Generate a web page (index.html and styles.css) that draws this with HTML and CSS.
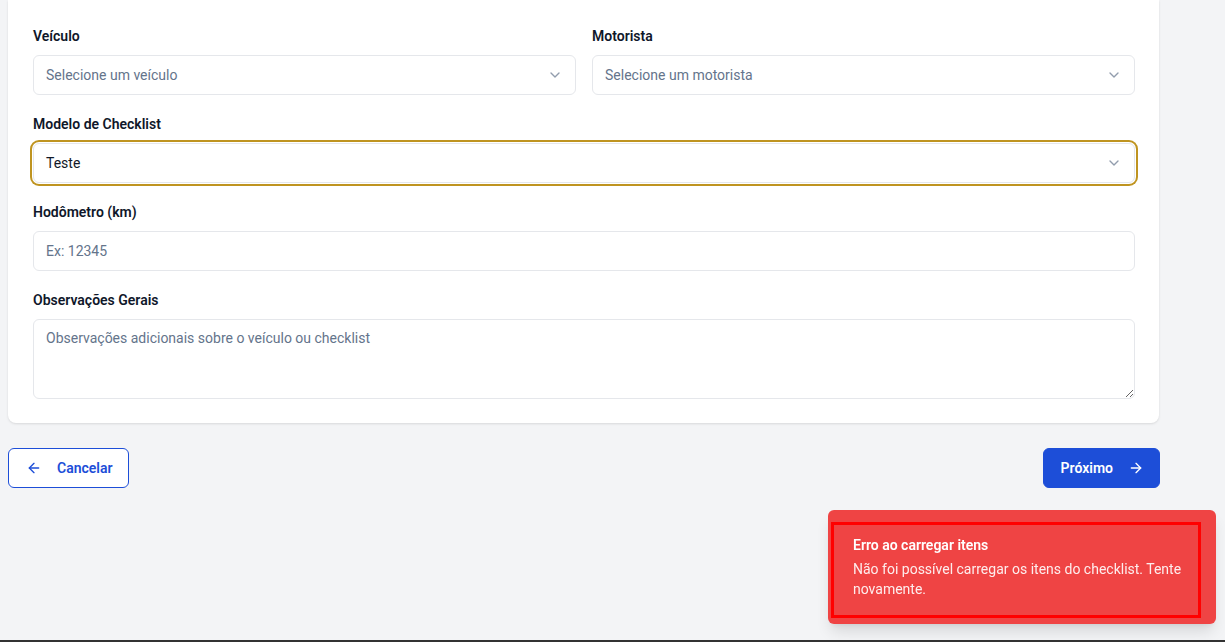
FILE: index.html
```html
<!DOCTYPE html>
<html lang="pt-BR">
<head>
<meta charset="utf-8">
<title>Checklist</title>
<link rel="stylesheet" href="styles.css">
</head>
<body>
<main class="page">
  <section class="card">
    <div class="row">
      <div class="field">
        <label class="label">Veículo</label>
        <button class="select" type="button">
          <span class="placeholder">Selecione um veículo</span>
          <svg class="chev" viewBox="0 0 24 24" width="16" height="16" fill="none" stroke="currentColor" stroke-width="2" stroke-linecap="round" stroke-linejoin="round"><path d="m6 9 6 6 6-6"/></svg>
        </button>
      </div>
      <div class="field">
        <label class="label">Motorista</label>
        <button class="select" type="button">
          <span class="placeholder">Selecione um motorista</span>
          <svg class="chev" viewBox="0 0 24 24" width="16" height="16" fill="none" stroke="currentColor" stroke-width="2" stroke-linecap="round" stroke-linejoin="round"><path d="m6 9 6 6 6-6"/></svg>
        </button>
      </div>
    </div>
    <div class="field">
      <label class="label">Modelo de Checklist</label>
      <button class="select focused" type="button">
        <span class="value">Teste</span>
        <svg class="chev" viewBox="0 0 24 24" width="16" height="16" fill="none" stroke="currentColor" stroke-width="2" stroke-linecap="round" stroke-linejoin="round"><path d="m6 9 6 6 6-6"/></svg>
      </button>
    </div>
    <div class="field">
      <label class="label">Hodômetro (km)</label>
      <input class="input" type="text" placeholder="Ex: 12345">
    </div>
    <div class="field">
      <label class="label">Observações Gerais</label>
      <textarea class="textarea" placeholder="Observações adicionais sobre o veículo ou checklist"></textarea>
    </div>
  </section>
  <div class="actions">
    <button class="btn btn-outline" type="button">
      <svg viewBox="0 0 24 24" width="16" height="16" fill="none" stroke="currentColor" stroke-width="2" stroke-linecap="round" stroke-linejoin="round"><path d="m12 19-7-7 7-7"/><path d="M19 12H5"/></svg>
      <span>Cancelar</span>
    </button>
    <button class="btn btn-primary" type="button">
      <span>Próximo</span>
      <svg viewBox="0 0 24 24" width="16" height="16" fill="none" stroke="currentColor" stroke-width="2" stroke-linecap="round" stroke-linejoin="round"><path d="M5 12h14"/><path d="m12 5 7 7-7 7"/></svg>
    </button>
  </div>
</main>
<div class="toast">
  <div class="toast-inner">
    <div class="toast-title">Erro ao carregar itens</div>
    <div class="toast-desc">Não foi possível carregar os itens do checklist. Tente novamente.</div>
  </div>
</div>
<div class="bottom-bar"></div>
</body>
</html>
```

FILE: styles.css
```css
* { box-sizing: border-box; }
html, body { height: 100%; }
body {
  margin: 0;
  background: #f3f4f6;
  font-family: Roboto, "Noto Sans", sans-serif;
  color: #111827;
  overflow: hidden;
}
.page {
  width: 1167px;
  padding: 0 8px;
}
.card {
  background: #fff;
  border-radius: 0 0 8px 8px;
  box-shadow: 0 1px 3px rgba(0,0,0,0.08), 0 1px 2px rgba(0,0,0,0.04);
  padding: 27px 24px 24px 25px;
  display: flex;
  flex-direction: column;
  gap: 20px;
}
.row {
  display: grid;
  grid-template-columns: 1fr 1fr;
  gap: 16px;
}
.field {
  display: flex;
  flex-direction: column;
}
.label {
  font-size: 14px;
  line-height: 20px;
  font-weight: 600;
  color: #0f172a;
  margin-bottom: 8px;
  position: relative;
  top: -1px;
}
.select, .input, .textarea {
  font-family: inherit;
  font-size: 14px;
  border: 1px solid #e5e7eb;
  border-radius: 6px;
  background: #fff;
  color: #111827;
}
.select {
  height: 40px;
  display: flex;
  align-items: center;
  justify-content: space-between;
  padding: 0 12px;
  text-align: left;
}
.select.focused {
  box-shadow: 0 0 0 1px #fff, 0 0 0 3px #bf9420;
}
.placeholder { color: #64748b; }
.value { color: #111827; }
.chev { color: #64748b; opacity: 0.7; flex: none; }
.input {
  height: 40px;
  padding: 0 12px;
  outline: none;
}
.textarea {
  height: 80px;
  padding: 8px 12px;
  line-height: 20px;
  outline: none;
  resize: vertical;
}
.input::placeholder, .textarea::placeholder { color: #64748b; }
.actions {
  margin-top: 25px;
  margin-right: -1px;
  display: flex;
  justify-content: space-between;
}
.btn {
  height: 40px;
  border-radius: 6px;
  font-family: inherit;
  font-size: 14px;
  font-weight: 600;
  display: flex;
  align-items: center;
  gap: 15px;
  padding: 0 15px 0 17px;
}
.btn-outline {
  background: #fff;
  border: 1px solid #1d4ed8;
  color: #1d4ed8;
}
.btn-primary {
  background: #1d4ed8;
  border: 1px solid #1d4ed8;
  color: #fff;
}
.toast {
  position: fixed;
  right: 9px;
  bottom: 18px;
  width: 388px;
  background: #ef4444;
  border-radius: 6px;
  box-shadow: 0 10px 15px -3px rgba(0,0,0,0.12), 0 4px 6px -4px rgba(0,0,0,0.1);
  padding: 12px 15px 6px 3px;
}
.toast-inner {
  border: 3px solid #ff0000;
  padding: 10px 16px 16px 19px;
  color: #fff;
}
.toast-title {
  font-size: 14px;
  line-height: 20px;
  font-weight: 600;
}
.toast-desc {
  font-size: 14px;
  line-height: 20px;
  opacity: 0.9;
  margin-top: 4px;
}
.bottom-bar {
  position: fixed;
  left: 0;
  right: 0;
  bottom: 0;
  height: 2px;
  background: #333;
}
```
